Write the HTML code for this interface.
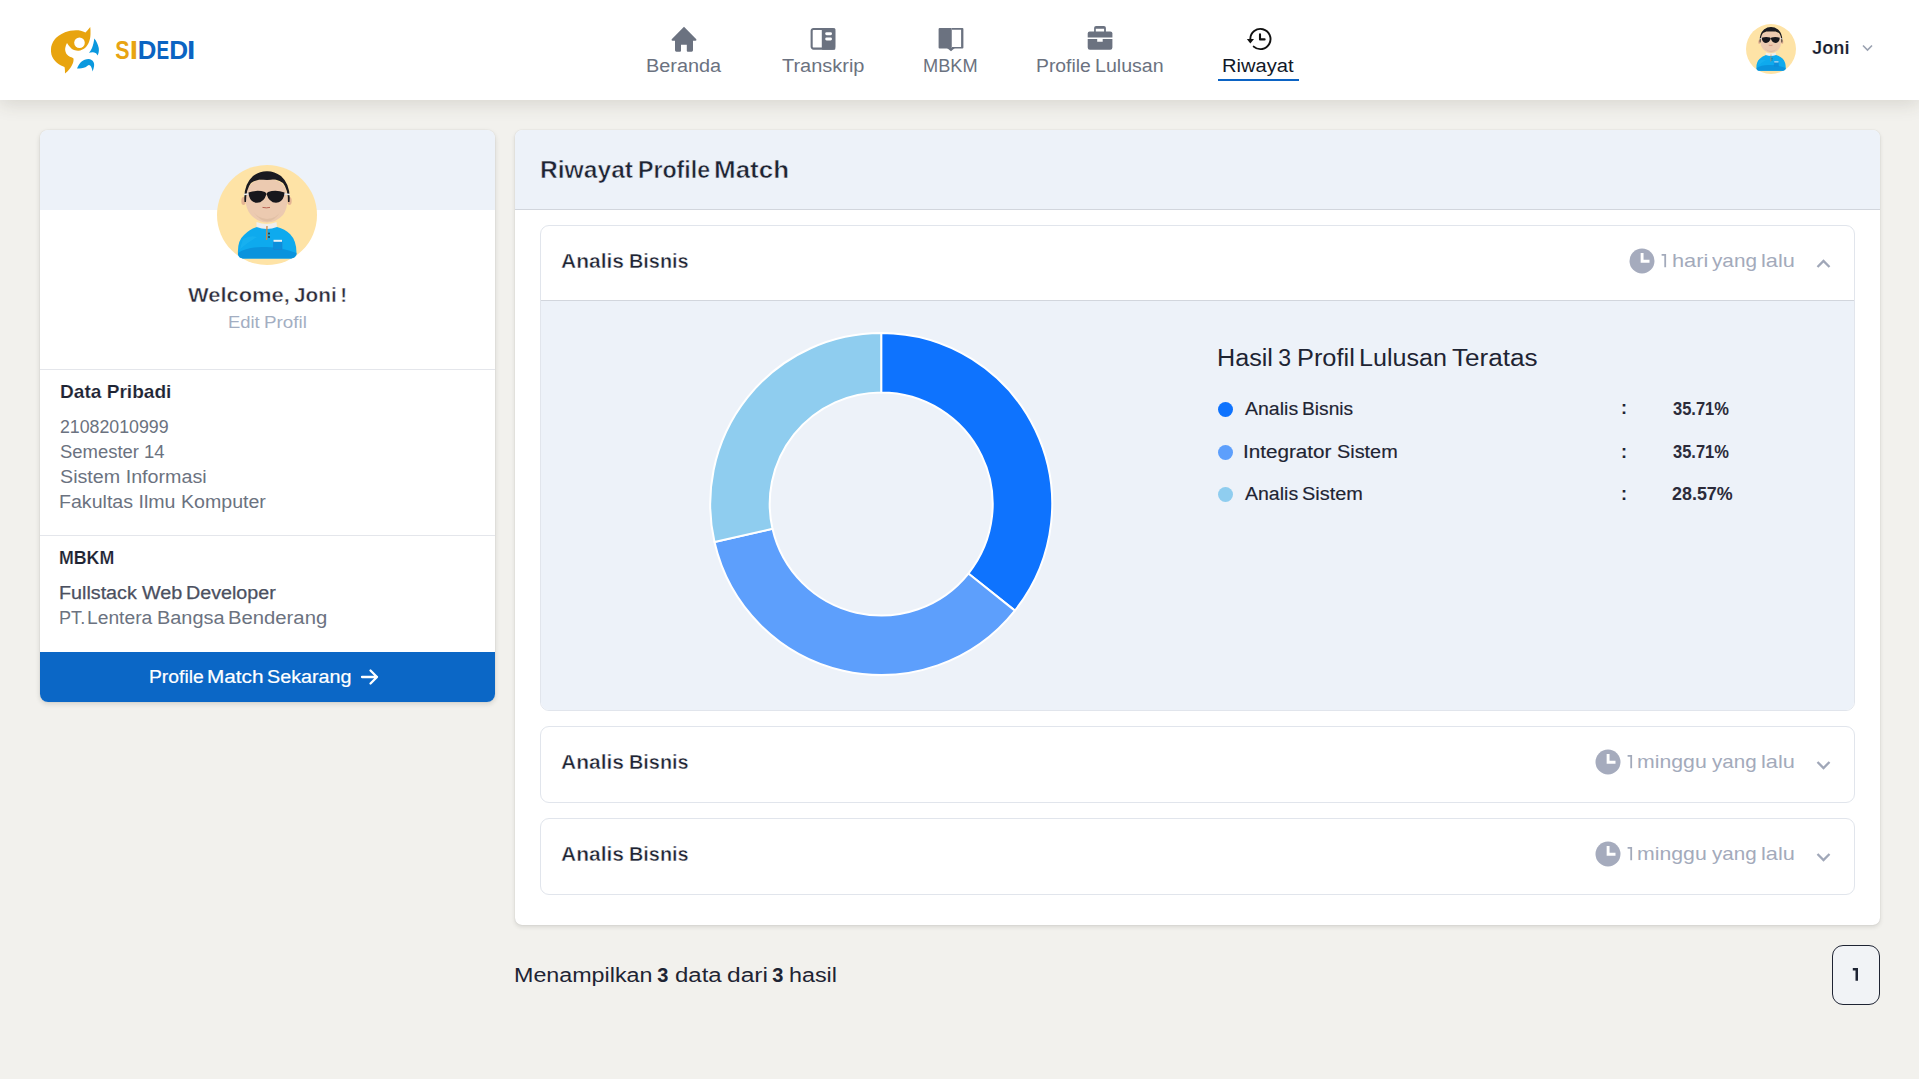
<!DOCTYPE html>
<html><head><meta charset="utf-8">
<style>
*{box-sizing:border-box;margin:0;padding:0}
html,body{width:1919px;height:1079px;overflow:hidden}
body{background:#f2f1ed;font-family:"Liberation Sans",sans-serif;position:relative}
.t{position:absolute;white-space:nowrap;line-height:1}
.abs{position:absolute}
#nav{position:absolute;left:0;top:0;width:1919px;height:100px;background:#fff;box-shadow:0 3px 18px rgba(60,55,40,0.16)}
.card{position:absolute;background:#fff;border-radius:8px;box-shadow:0 0 1px rgba(40,40,30,0.20),0 2px 5px rgba(40,40,30,0.15);overflow:hidden}
.acc{position:absolute;border:1px solid #e1e5ec;border-radius:9px;background:#fff;overflow:hidden}
</style></head><body>
<div id="nav"></div>
<!-- nav underline -->
<div class="abs" style="left:1218px;top:79px;width:81px;height:2px;background:#0b63c4"></div>

<!-- logo icon -->
<svg class="abs" style="left:46px;top:24px" width="58" height="54" viewBox="0 0 58 54">
  <path d="M44.25 3 C42.5 5 41 7 39.5 8.5 C36 6.8 33 6.2 30 6.25 C26 6.3 22 7 19 8.25 C14 10.5 10.5 13 9 15 C6 19 5 22 5 25 C4.8 29 5.5 32 7.5 35 C9.5 38 12 40 15 41.5 L18.5 43 C19 45 19 47.5 19 49.5 C21 48 22.5 46.5 23.5 45 C25.5 42.5 26.8 40 27.25 38 C27.6 36.5 27.6 35.5 27.5 34.5 C26 33.5 24.8 33 23.5 32.5 C21.8 31.5 20.5 30.3 20 29 C19.2 27 19 25.5 19.25 24 C19.6 22 20.2 20.3 21 19 C22 20.5 23 22 24 23 C25.3 24.5 26.5 25.5 28 26 C29.5 26.6 31 26.8 32.5 26.75 C35 26.5 37 25.5 39 24 C40.8 22.3 42 20.3 43 18 C44 15.5 44.4 13 44.5 10 C44.6 7.5 44.5 5 44.25 3 Z" fill="#e8a40f"/>
  <circle cx="33.5" cy="18.75" r="5.3" fill="#fff"/>
  <path d="M48.25 14.5 C50.5 17 52 20.5 52.75 24 C53.2 27 52.6 29.5 51.5 31.5 C50.8 30 50.2 29.3 49.5 29 C48.5 28.3 47.5 28.2 46.5 28.25 C45.3 28.3 44 28.5 43 28.75 C44.3 27.3 45.3 25.8 46 24 C47.2 21 47.9 18 48.25 14.5 Z" fill="#0a98de"/>
  <path d="M31 44.5 C32 42 33.3 40 35 38 C37.3 36 40 35 42.5 35 C44.8 35.2 46.6 36.3 47.5 38 C48.3 39.5 48.2 41 48 42.5 C47.8 44.3 47.2 46 46.5 47.5 C46.2 45.5 45.8 44 45 42.5 C44.5 41.8 43.8 41.2 43 41 C42 41 41 42 40 43 C37 44.2 34 44.5 31 44.5 Z" fill="#0a98de"/>
</svg>

<!-- nav icons -->
<svg class="abs" style="left:670px;top:26px" width="28" height="27" viewBox="0 0 28 27">
  <path d="M14 0.7 L26.3 13.2 Q27 14.6 25.5 14.8 L23 14.8 L23 24.3 Q23 25.7 21.6 25.7 L17.8 25.7 Q16.8 25.7 16.8 24.7 L16.8 18.7 L11 18.7 L11 24.7 Q11 25.7 10 25.7 L6.4 25.7 Q5 25.7 5 24.3 L5 14.8 L2.5 14.8 Q1 14.6 1.7 13.2 Z" fill="#6b7280"/>
</svg>
<svg class="abs" style="left:809px;top:27px" width="28" height="25" viewBox="0 0 28 25">
  <rect x="2.65" y="1.95" width="22.6" height="19.7" rx="1.8" fill="none" stroke="#6b7280" stroke-width="2.1"/>
  <rect x="12.8" y="1.2" width="13.5" height="21.5" rx="1" fill="#6b7280"/>
  <rect x="16.2" y="5.3" width="6.8" height="2.95" rx="1.4" fill="#fff"/>
  <rect x="16.2" y="10.5" width="6.8" height="2.9" rx="1.4" fill="#fff"/>
</svg>
<svg class="abs" style="left:937px;top:27px" width="28" height="26" viewBox="0 0 28 26">
  <path d="M2.6 1 L14.4 1 L14.4 21.4 L2.6 21.4 Q1.6 21.4 1.6 20.4 L1.6 2 Q1.6 1 2.6 1 Z" fill="#6b7280"/>
  <path d="M14.4 1 L25.4 1 Q26.4 1 26.4 2 L26.4 20.4 Q26.4 21.4 25.4 21.4 L14.4 21.4 Z M15 2.8 L15 20 L24.1 20 L24.1 2.8 Z" fill="#6b7280" fill-rule="evenodd"/>
  <path d="M10 21 L17.8 21 L14 24.2 Z" fill="#6b7280"/>
</svg>
<svg class="abs" style="left:1086px;top:25px" width="28" height="27" viewBox="0 0 28 27">
  <path d="M8.1 7 L8.1 3 Q8.1 1 10.1 1 L17.9 1 Q19.9 1 19.9 3 L19.9 7 L18.1 7 L18.1 3.8 L9.8 3.8 L9.8 7 Z" fill="#6b7280"/>
  <path d="M3.7 6.4 L24.4 6.4 Q26.4 6.4 26.4 8.4 L26.4 12.6 L1.7 12.6 L1.7 8.4 Q1.7 6.4 3.7 6.4 Z" fill="#6b7280"/>
  <path d="M1.7 14.1 L11.2 14.1 L11.2 16.7 L16.7 16.7 L16.7 14.1 L26.4 14.1 L26.4 22.6 Q26.4 24.8 24.2 24.8 L3.9 24.8 Q1.7 24.8 1.7 22.6 Z" fill="#6b7280"/>
</svg>
<svg class="abs" style="left:1245px;top:26px" width="28" height="26" viewBox="0 0 28 26">
  <path d="M5.3 13 A 10.1 10.1 0 1 1 8.7 20.6" fill="none" stroke="#111" stroke-width="1.9" stroke-linecap="round"/>
  <path d="M1.9 13.1 L9 13.1 L5.3 17.5 Z" fill="#111"/>
  <path d="M15 8.4 L15 13.4 L19.6 13.4" fill="none" stroke="#111" stroke-width="2.1" stroke-linecap="round" stroke-linejoin="round"/>
</svg>

<!-- top-right avatar -->
<svg class="abs" style="left:1746px;top:24px" width="50" height="50" viewBox="0 0 100 100">
  <use href="#avatar"/>
</svg>
<svg class="abs" style="left:1862px;top:44px" width="11" height="8" viewBox="0 0 11 8">
  <path d="M1 1.5 L5.5 6 L10 1.5" fill="none" stroke="#9aa1b0" stroke-width="1.6"/>
</svg>

<svg width="0" height="0" style="position:absolute">
 <defs>
  <g id="avatar">
   <circle cx="50" cy="50" r="50" fill="#fee3a6"/>
   <path d="M21 90 Q20 76 27 70 Q33 64 40 62 L60 62 Q68 64 73 69 Q80 76 79.5 90 Q78 93 74 93.5 L26 93.5 Q22 93 21 90 Z" fill="#0eaaee"/>
   <path d="M21 88 Q30 82 45 82 Q62 81 79.5 88 Q79 92.5 74 93.5 L26 93.5 Q21.5 93 21 88 Z" fill="#0a93dd"/>
   <path d="M26 74 Q34 70 40 72 Q30 78 23 84 Z" fill="#1cb4f2" opacity="0.6"/>
   <path d="M39.5 57 Q50 61 59.5 57 L60 62 Q50 66 39.5 62 Z" fill="#eeeeee"/>
   <path d="M50 61 L49.5 75" stroke="#c98a4c" stroke-width="1.3"/>
   <circle cx="52" cy="68.5" r="0.9" fill="#233"/><circle cx="52" cy="72" r="0.9" fill="#233"/>
   <rect x="56.5" y="75.5" width="8.5" height="9" rx="1" fill="#0a8fdc" stroke="#1e7fd0" stroke-width="0.6"/>
   <rect x="56.5" y="74.8" width="8.5" height="2" fill="#e9f1f6"/>
   <ellipse cx="26.5" cy="36" rx="2.2" ry="4" fill="#e4b493"/>
   <ellipse cx="72.5" cy="36" rx="2.2" ry="4" fill="#e4b493"/>
   <path d="M28.6 34 Q28.6 14 49.5 14 Q70.4 14 70.4 34 Q70.4 44 66 50 Q59 57.5 50 57.5 Q41 57.5 34 50 Q28.6 44 28.6 34 Z" fill="#eccab0"/>
   <path d="M36 46 Q42 56 50 56.5 Q58 56 64 46 Q60 53 50 54 Q40 53 36 46 Z" fill="#d9b79c" opacity="0.6"/>
   <path d="M27.5 37 Q26 20 36 11 Q43 6 50 6.2 Q57 6 64 11 Q74 20 72.5 37 L71 37 Q71 24 66 18 Q59 13.5 50 13.8 Q41 13.5 34 18 Q29 24 29 37 Z" fill="#1a1a20"/>
   <path d="M36 12 Q50 5 64 12 Q58 15 50 15 Q42 15 36 12 Z" fill="#1a1a20"/>
   <path d="M27 29.5 L32 29 M67 29 L73 29.5" stroke="#e8e8e8" stroke-width="1.6"/>
   <path d="M31.5 27.5 Q40 24.5 48 27 Q49 28 49.5 29 Q47 37.5 40 37.8 Q34 37.5 32 31 Z" fill="#17171c"/>
   <path d="M67.5 27.5 Q59 24.5 51 27 Q50 28 49.5 29 Q52 37.5 59 37.8 Q65 37.5 67 31 Z" fill="#17171c"/>
   <path d="M45.5 42.4 Q49.5 43.3 53 42.4" stroke="#b3584a" stroke-width="0.9" fill="none"/>
  </g>
 </defs>
</svg>

<!-- left card -->
<div class="card" style="left:40px;top:130px;width:455px;height:572px">
  <div class="abs" style="left:0;top:0;width:455px;height:80px;background:#edf2f9"></div>
  <div class="abs" style="left:0;top:239px;width:455px;height:1px;background:#e4e6eb"></div>
  <div class="abs" style="left:0;top:405px;width:455px;height:1px;background:#e4e6eb"></div>
  <div class="abs" style="left:0;top:522px;width:455px;height:50px;background:#0b67c6"></div>
</div>
<svg class="abs" style="left:217px;top:165px" width="100" height="100" viewBox="0 0 100 100"><use href="#avatar"/></svg>
<svg class="abs" style="left:360px;top:668px" width="20" height="18" viewBox="0 0 20 18">
  <path d="M2 9 L17 9 M10.5 2.5 L17 9 L10.5 15.5" fill="none" stroke="#fff" stroke-width="2.3" stroke-linecap="round" stroke-linejoin="round"/>
</svg>

<!-- main card -->
<div class="card" style="left:515px;top:130px;width:1365px;height:795px;border-radius:7px;box-shadow:0 0 1px rgba(40,40,30,0.22),0 2px 4px rgba(40,40,30,0.13)">
  <div class="abs" style="left:0;top:0;width:1365px;height:80px;background:#edf2f9;border-bottom:1px solid #d2d6dd"></div>
</div>
<div class="acc" style="left:540px;top:225px;width:1315px;height:486px">
  <div class="abs" style="left:0;top:74px;width:1315px;height:411px;background:#edf2f9;border-top:1px solid #d2d6dd"></div>
</div>
<div class="acc" style="left:540px;top:726px;width:1315px;height:77px"></div>
<div class="acc" style="left:540px;top:818px;width:1315px;height:77px"></div>

<!-- donut -->
<svg class="abs" style="left:700px;top:323px" width="362" height="362" viewBox="0 0 362 362">
<path d="M181.200 10.000 A171 171 0 0 1 314.898 287.611 L268.377 250.515 A111.5 111.5 0 0 0 181.200 69.500 Z" fill="#0e73fe" stroke="#fff" stroke-width="2" stroke-linejoin="round"/>
<path d="M314.898 287.611 A171 171 0 0 1 14.491 219.066 L72.498 205.821 A111.5 111.5 0 0 0 268.377 250.515 Z" fill="#5d9ffc" stroke="#fff" stroke-width="2" stroke-linejoin="round"/>
<path d="M14.491 219.066 A171 171 0 0 1 181.200 10.000 L181.200 69.500 A111.5 111.5 0 0 0 72.498 205.821 Z" fill="#8fcdef" stroke="#fff" stroke-width="2" stroke-linejoin="round"/>
</svg>
<!-- legend dots -->
<div class="abs" style="left:1218px;top:402px;width:15px;height:15px;border-radius:50%;background:#0e73fe"></div>
<div class="abs" style="left:1218px;top:444.5px;width:15px;height:15px;border-radius:50%;background:#5d9ffc"></div>
<div class="abs" style="left:1218px;top:486.5px;width:15px;height:15px;border-radius:50%;background:#8fcdef"></div>

<svg class="abs" style="left:1629.2px;top:247.8px" width="26" height="26" viewBox="0 0 26 26"><circle cx="13" cy="13" r="12.5" fill="#a5abbd"/><path d="M13.1 5.1 L13.1 13.25 L20.5 13.25" fill="none" stroke="#fff" stroke-width="2.9"/></svg>
<svg class="abs" style="left:1816px;top:259px" width="15" height="10" viewBox="0 0 15 10"><path d="M1.5 8 L7.5 2 L13.5 8" fill="none" stroke="#a0a7b8" stroke-width="2.3"/></svg>
<svg class="abs" style="left:1594.5px;top:748.8px" width="26" height="26" viewBox="0 0 26 26"><circle cx="13" cy="13" r="12.5" fill="#a5abbd"/><path d="M13.1 5.1 L13.1 13.25 L20.5 13.25" fill="none" stroke="#fff" stroke-width="2.9"/></svg>
<svg class="abs" style="left:1816px;top:760px" width="15" height="10" viewBox="0 0 15 10"><path d="M1.5 2 L7.5 8 L13.5 2" fill="none" stroke="#a0a7b8" stroke-width="2.3"/></svg>
<svg class="abs" style="left:1594.5px;top:840.8px" width="26" height="26" viewBox="0 0 26 26"><circle cx="13" cy="13" r="12.5" fill="#a5abbd"/><path d="M13.1 5.1 L13.1 13.25 L20.5 13.25" fill="none" stroke="#fff" stroke-width="2.9"/></svg>
<svg class="abs" style="left:1816px;top:852px" width="15" height="10" viewBox="0 0 15 10"><path d="M1.5 2 L7.5 8 L13.5 2" fill="none" stroke="#a0a7b8" stroke-width="2.3"/></svg>

<!-- pagination -->
<div class="abs" style="left:1832px;top:945px;width:48px;height:60px;border:1.25px solid #1f2433;border-radius:11px;background:#f1f3f6"></div>

<svg class="abs" style="left:0;top:0" width="220" height="80" font-family="Liberation Sans" font-weight="700" font-size="26.5"><text transform="translate(115.20 59) scale(0.811 1)" fill="#e8a413">S</text><text transform="translate(129.77 59) scale(1.127 1)" fill="#e8a413">I</text><text transform="translate(137.74 59) scale(0.974 1)" fill="#0b64c2">D</text><text transform="translate(156.61 59) scale(0.714 1)" fill="#0b64c2">E</text><text transform="translate(169.32 59) scale(0.987 1)" fill="#0b64c2">D</text><text transform="translate(187.07 59) scale(1.127 1)" fill="#0b64c2">I</text></svg>
<div class="t" style="left:645.91px;top:56.66px;font-size:18px;transform:scaleX(1.1036);transform-origin:0 0;color:#6b7280;font-weight:400;">Beranda</div>
<div class="t" style="left:782.10px;top:56.66px;font-size:18px;transform:scaleX(1.1091);transform-origin:0 0;color:#6b7280;font-weight:400;">Transkrip</div>
<div class="t" style="left:922.94px;top:56.66px;font-size:18px;transform:scaleX(1.0112);transform-origin:0 0;color:#6b7280;font-weight:400;">MBKM</div>
<div class="t" style="left:1036.25px;top:56.76px;font-size:18px;transform:scaleX(1.0742);transform-origin:0 0;color:#6b7280;font-weight:400;">Profile</div>
<div class="t" style="left:1095.23px;top:56.76px;font-size:18px;transform:scaleX(1.0879);transform-origin:0 0;color:#6b7280;font-weight:400;">Lulusan</div>
<div class="t" style="left:1222.39px;top:56.96px;font-size:18px;transform:scaleX(1.1175);transform-origin:0 0;color:#111827;font-weight:400;">Riwayat</div>
<div class="t" style="left:1812.13px;top:39.89px;font-size:17.5px;transform:scaleX(1.0416);transform-origin:0 0;color:#161b2e;font-weight:700;-webkit-text-stroke:0.2px #fff;">Joni</div>
<div class="t" style="left:187.80px;top:285.45px;font-size:20.5px;transform:scaleX(1.0683);transform-origin:0 0;color:#2b2b3a;font-weight:700;-webkit-text-stroke:0.45px #fff;">Welcome,</div>
<div class="t" style="left:293.69px;top:285.45px;font-size:20.5px;transform:scaleX(1.0127);transform-origin:0 0;color:#2b2b3a;font-weight:700;-webkit-text-stroke:0.45px #fff;">Joni</div>
<div class="t" style="left:340.35px;top:285.45px;font-size:20.5px;letter-spacing:0.000px;color:#2b2b3a;font-weight:700;-webkit-text-stroke:0.45px #fff;">!</div>
<div class="t" style="left:227.73px;top:314.41px;font-size:17px;transform:scaleX(1.0829);transform-origin:0 0;color:#a3aec2;font-weight:400;">Edit</div>
<div class="t" style="left:264.19px;top:314.41px;font-size:17px;transform:scaleX(1.1074);transform-origin:0 0;color:#a3aec2;font-weight:400;">Profil</div>
<div class="t" style="left:59.51px;top:382.86px;font-size:18px;transform:scaleX(1.0609);transform-origin:0 0;color:#1e2433;font-weight:700;-webkit-text-stroke:0.15px #fff;">Data Pribadi</div>
<div class="t" style="left:59.86px;top:418.79px;font-size:17.5px;transform:scaleX(1.0142);transform-origin:0 0;color:#6b7280;font-weight:400;">21082010999</div>
<div class="t" style="left:59.92px;top:443.69px;font-size:17.5px;transform:scaleX(1.0545);transform-origin:0 0;color:#6b7280;font-weight:400;">Semester 14</div>
<div class="t" style="left:59.86px;top:468.89px;font-size:17.5px;transform:scaleX(1.1253);transform-origin:0 0;color:#6b7280;font-weight:400;">Sistem Informasi</div>
<div class="t" style="left:59.18px;top:493.79px;font-size:17.5px;transform:scaleX(1.1196);transform-origin:0 0;color:#6b7280;font-weight:400;">Fakultas Ilmu Komputer</div>
<div class="t" style="left:59.35px;top:549.59px;font-size:17.5px;transform:scaleX(1.0142);transform-origin:0 0;color:#1e2433;font-weight:700;-webkit-text-stroke:0.15px #fff;">MBKM</div>
<div class="t" style="left:58.92px;top:583.76px;font-size:18px;transform:scaleX(1.0953);transform-origin:0 0;color:#4b5060;font-weight:400;-webkit-text-stroke:0.25px #4b5060;">Fullstack</div>
<div class="t" style="left:142.40px;top:583.76px;font-size:18px;transform:scaleX(1.0999);transform-origin:0 0;color:#4b5060;font-weight:400;-webkit-text-stroke:0.25px #4b5060;">Web</div>
<div class="t" style="left:186.23px;top:583.76px;font-size:18px;transform:scaleX(1.0937);transform-origin:0 0;color:#4b5060;font-weight:400;-webkit-text-stroke:0.25px #4b5060;">Developer</div>
<div class="t" style="left:59.05px;top:609.06px;font-size:18px;transform:scaleX(1.0061);transform-origin:0 0;color:#6b7280;font-weight:400;">PT.</div>
<div class="t" style="left:87.26px;top:609.06px;font-size:18px;transform:scaleX(1.0692);transform-origin:0 0;color:#6b7280;font-weight:400;">Lentera</div>
<div class="t" style="left:156.71px;top:609.06px;font-size:18px;transform:scaleX(1.1061);transform-origin:0 0;color:#6b7280;font-weight:400;">Bangsa</div>
<div class="t" style="left:227.78px;top:609.06px;font-size:18px;transform:scaleX(1.1263);transform-origin:0 0;color:#6b7280;font-weight:400;">Benderang</div>
<div class="t" style="left:148.66px;top:667.76px;font-size:18px;transform:scaleX(1.0722);transform-origin:0 0;color:#ffffff;font-weight:400;-webkit-text-stroke:0.2px #fff;">Profile</div>
<div class="t" style="left:206.74px;top:667.76px;font-size:18px;transform:scaleX(1.1521);transform-origin:0 0;color:#ffffff;font-weight:400;-webkit-text-stroke:0.2px #fff;">Match</div>
<div class="t" style="left:266.81px;top:667.76px;font-size:18px;transform:scaleX(1.0965);transform-origin:0 0;color:#ffffff;font-weight:400;-webkit-text-stroke:0.2px #fff;">Sekarang</div>
<div class="t" style="left:540.30px;top:158.53px;font-size:23px;transform:scaleX(1.0705);transform-origin:0 0;color:#1e2433;font-weight:700;-webkit-text-stroke:0.5px #edf2f9;paint-order:normal;">Riwayat</div>
<div class="t" style="left:638.49px;top:158.53px;font-size:23px;transform:scaleX(1.0068);transform-origin:0 0;color:#1e2433;font-weight:700;-webkit-text-stroke:0.5px #edf2f9;paint-order:normal;">Profile</div>
<div class="t" style="left:714.21px;top:158.53px;font-size:23px;transform:scaleX(1.1290);transform-origin:0 0;color:#1e2433;font-weight:700;-webkit-text-stroke:0.5px #edf2f9;paint-order:normal;">Match</div>
<div class="t" style="left:1216.89px;top:346.53px;font-size:23px;transform:scaleX(1.0938);transform-origin:0 0;color:#1e2433;font-weight:400;">Hasil</div>
<div class="t" style="left:1278.18px;top:346.53px;font-size:23px;letter-spacing:0.000px;color:#1e2433;font-weight:400;">3</div>
<div class="t" style="left:1296.57px;top:346.53px;font-size:23px;transform:scaleX(1.1023);transform-origin:0 0;color:#1e2433;font-weight:400;">Profil</div>
<div class="t" style="left:1358.59px;top:346.53px;font-size:23px;transform:scaleX(1.0912);transform-origin:0 0;color:#1e2433;font-weight:400;">Lulusan</div>
<div class="t" style="left:1452.18px;top:346.53px;font-size:23px;transform:scaleX(1.1352);transform-origin:0 0;color:#1e2433;font-weight:400;">Teratas</div>
<div class="t" style="left:1244.60px;top:399.76px;font-size:18px;transform:scaleX(1.0843);transform-origin:0 0;color:#1e2433;font-weight:400;-webkit-text-stroke:0.15px #1e2433;">Analis</div>
<div class="t" style="left:1301.67px;top:399.76px;font-size:18px;transform:scaleX(1.0654);transform-origin:0 0;color:#1e2433;font-weight:400;-webkit-text-stroke:0.15px #1e2433;">Bisnis</div>
<div class="t" style="left:1242.74px;top:442.56px;font-size:18px;transform:scaleX(1.1484);transform-origin:0 0;color:#1e2433;font-weight:400;-webkit-text-stroke:0.15px #1e2433;">Integrator</div>
<div class="t" style="left:1336.51px;top:442.56px;font-size:18px;transform:scaleX(1.1036);transform-origin:0 0;color:#1e2433;font-weight:400;-webkit-text-stroke:0.15px #1e2433;">Sistem</div>
<div class="t" style="left:1244.60px;top:484.76px;font-size:18px;transform:scaleX(1.0843);transform-origin:0 0;color:#1e2433;font-weight:400;-webkit-text-stroke:0.15px #1e2433;">Analis</div>
<div class="t" style="left:1302.30px;top:484.76px;font-size:18px;transform:scaleX(1.1055);transform-origin:0 0;color:#1e2433;font-weight:400;-webkit-text-stroke:0.15px #1e2433;">Sistem</div>
<div class="t" style="left:1672.69px;top:400.69px;font-size:17.5px;transform:scaleX(0.9430);transform-origin:0 0;color:#2b2b3a;font-weight:700;">35.71%</div>
<div class="t" style="left:1672.69px;top:443.79px;font-size:17.5px;transform:scaleX(0.9430);transform-origin:0 0;color:#2b2b3a;font-weight:700;">35.71%</div>
<div class="t" style="left:1672.47px;top:485.99px;font-size:17.5px;transform:scaleX(1.0229);transform-origin:0 0;color:#2b2b3a;font-weight:700;">28.57%</div>
<div class="t" style="left:1621px;top:399.46px;font-size:18px;font-weight:700;color:#1e2433">:</div>
<div class="t" style="left:1621px;top:442.56px;font-size:18px;font-weight:700;color:#1e2433">:</div>
<div class="t" style="left:1621px;top:484.76px;font-size:18px;font-weight:700;color:#1e2433">:</div>
<div class="t" style="left:561.28px;top:251.17px;font-size:20px;transform:scaleX(1.0494);transform-origin:0 0;color:#1e2433;font-weight:700;-webkit-text-stroke:0.45px #fff;">Analis</div>
<div class="t" style="left:628.51px;top:251.17px;font-size:20px;transform:scaleX(0.9931);transform-origin:0 0;color:#1e2433;font-weight:700;-webkit-text-stroke:0.45px #fff;">Bisnis</div>
<svg class="abs" style="left:1659.20px;top:252.00px" width="10" height="18" viewBox="1660 252 10 18"><path d="M1662.6 254 L1667.1 254 L1667.1 267.2 L1665.3 267.2 L1665.3 255.8 L1662.6 255.8 Z" fill="#a3aabb"/></svg>
<div class="t" style="left:1671.58px;top:251.02px;font-size:19px;transform:scaleX(1.1455);transform-origin:0 0;color:#a3aabb;font-weight:400;">hari</div>
<div class="t" style="left:1712.00px;top:251.02px;font-size:19px;transform:scaleX(1.0903);transform-origin:0 0;color:#a3aabb;font-weight:400;">yang</div>
<div class="t" style="left:1760.89px;top:251.02px;font-size:19px;transform:scaleX(1.1450);transform-origin:0 0;color:#a3aabb;font-weight:400;">lalu</div>
<div class="t" style="left:561.28px;top:752.07px;font-size:20px;transform:scaleX(1.0494);transform-origin:0 0;color:#1e2433;font-weight:700;-webkit-text-stroke:0.45px #fff;">Analis</div>
<div class="t" style="left:628.51px;top:752.07px;font-size:20px;transform:scaleX(0.9931);transform-origin:0 0;color:#1e2433;font-weight:700;-webkit-text-stroke:0.45px #fff;">Bisnis</div>
<svg class="abs" style="left:1624.80px;top:752.90px" width="10" height="18" viewBox="1660 252 10 18"><path d="M1662.6 254 L1667.1 254 L1667.1 267.2 L1665.3 267.2 L1665.3 255.8 L1662.6 255.8 Z" fill="#a3aabb"/></svg>
<div class="t" style="left:1637.42px;top:751.92px;font-size:19px;transform:scaleX(1.1195);transform-origin:0 0;color:#a3aabb;font-weight:400;">minggu</div>
<div class="t" style="left:1712.30px;top:751.92px;font-size:19px;transform:scaleX(1.0828);transform-origin:0 0;color:#a3aabb;font-weight:400;">yang</div>
<div class="t" style="left:1760.69px;top:751.92px;font-size:19px;transform:scaleX(1.1450);transform-origin:0 0;color:#a3aabb;font-weight:400;">lalu</div>
<div class="t" style="left:561.28px;top:844.07px;font-size:20px;transform:scaleX(1.0494);transform-origin:0 0;color:#1e2433;font-weight:700;-webkit-text-stroke:0.45px #fff;">Analis</div>
<div class="t" style="left:628.51px;top:844.07px;font-size:20px;transform:scaleX(0.9931);transform-origin:0 0;color:#1e2433;font-weight:700;-webkit-text-stroke:0.45px #fff;">Bisnis</div>
<svg class="abs" style="left:1624.80px;top:844.90px" width="10" height="18" viewBox="1660 252 10 18"><path d="M1662.6 254 L1667.1 254 L1667.1 267.2 L1665.3 267.2 L1665.3 255.8 L1662.6 255.8 Z" fill="#a3aabb"/></svg>
<div class="t" style="left:1637.42px;top:843.92px;font-size:19px;transform:scaleX(1.1195);transform-origin:0 0;color:#a3aabb;font-weight:400;">minggu</div>
<div class="t" style="left:1712.30px;top:843.92px;font-size:19px;transform:scaleX(1.0828);transform-origin:0 0;color:#a3aabb;font-weight:400;">yang</div>
<div class="t" style="left:1760.69px;top:843.92px;font-size:19px;transform:scaleX(1.1450);transform-origin:0 0;color:#a3aabb;font-weight:400;">lalu</div>
<div class="t" style="left:514.04px;top:965.07px;font-size:20px;transform:scaleX(1.1638);transform-origin:0 0;color:#1e2433;font-weight:400;">Menampilkan</div>
<div class="t" style="left:657.30px;top:965.07px;font-size:20px;letter-spacing:0.000px;color:#1e2433;font-weight:700;">3</div>
<div class="t" style="left:674.54px;top:965.07px;font-size:20px;transform:scaleX(1.1969);transform-origin:0 0;color:#1e2433;font-weight:400;">data</div>
<div class="t" style="left:726.92px;top:965.07px;font-size:20px;transform:scaleX(1.2276);transform-origin:0 0;color:#1e2433;font-weight:400;">dari</div>
<div class="t" style="left:772.20px;top:965.07px;font-size:20px;letter-spacing:0.000px;color:#1e2433;font-weight:700;">3</div>
<div class="t" style="left:788.77px;top:965.07px;font-size:20px;transform:scaleX(1.1641);transform-origin:0 0;color:#1e2433;font-weight:400;">hasil</div>
<svg class="abs" style="left:1850px;top:966px" width="12" height="17" viewBox="1850 966 12 17"><path d="M1852.8 968 L1858 968 L1858 980.8 L1855.5 980.8 L1855.5 970.4 L1852.8 970.4 Z" fill="#1e2433"/></svg>
</body></html>
